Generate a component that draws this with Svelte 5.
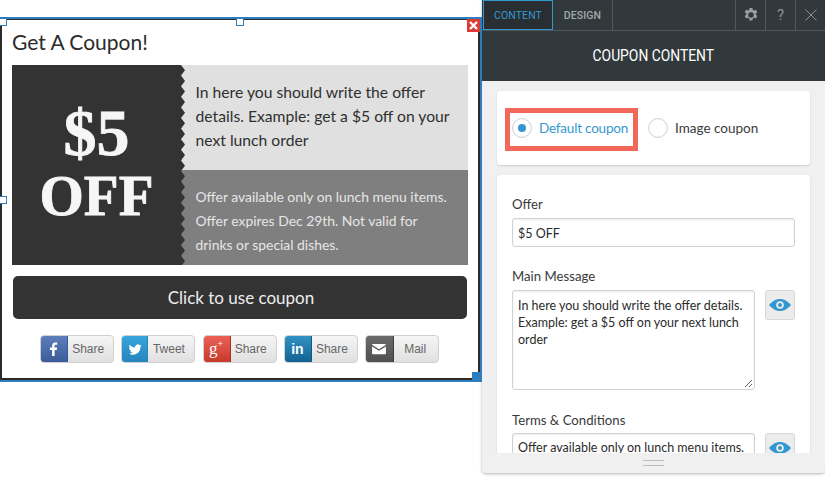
<script>
	const shares = [
		{ id: 'fb', label: 'Share' },
		{ id: 'tw', label: 'Tweet' },
		{ id: 'gp', label: 'Share' },
		{ id: 'li', label: 'Share' },
		{ id: 'mail', label: 'Mail' }
	];
	const teeth = Array.from({ length: 19 }, (_, i) => i);
	const zigzag = 'M0 0' + teeth.map((i) => ` L4 ${i * 10.6 + 5.3} L0 ${(i + 1) * 10.6}`).join('') + ' Z';
</script>

<div class="page">
	<section class="stage">
		<div class="frame">
			<span class="handle tl"></span>
			<span class="handle tc"></span>
			<span class="handle ml"></span>
			<span class="handle br"></span>
			<span class="remove">
				<svg viewBox="0 0 13 13" width="13" height="13"><path d="M3 3l7 7M10 3l-7 7" stroke="#fff" stroke-width="2.4" /></svg>
			</span>

			<h1>Get A Coupon!</h1>
			<div class="offer">
				<div class="price">
					<div class="amount">$5</div>
					<div class="off">OFF</div>
					<svg class="teeth" width="4" height="200" viewBox="0 0 4 200"><path d={zigzag} fill="#333" /></svg>
				</div>
				<div class="details">
					<p class="message">In here you should write the offer details. Example: get a $5 off on your next lunch order</p>
					<p class="terms">Offer available only on lunch menu items. Offer expires Dec 29th. Not valid for drinks or special dishes.</p>
				</div>
			</div>
			<button class="use">Click to use coupon</button>
			<div class="shares">
				{#each shares as s}
					<div class="share" class:wide={s.id === 'mail'}>
						<span class="ico {s.id}">
							{#if s.id === 'fb'}
								<svg viewBox="0 0 27 27" width="27" height="27"><path d="M14.600 20v-6h2.200l.3-2.500h-2.500v-1.600c0-.7.3-1.200 1.200-1.200h1.400V6.500c-.3 0-1-.1-1.900-.1-2 0-3.200 1.200-3.200 3.300v1.800H9.900V14h2.200v6z" fill="#fff" /></svg>
							{:else if s.id === 'tw'}
								<svg viewBox="0 0 27 27" width="25" height="25"><path d="M21 9c-.5.200-1.100.4-1.700.5.600-.4 1.100-1 1.300-1.600-.6.300-1.200.6-1.900.7a3 3 0 0 0-5.100 2.700c-2.500-.1-4.700-1.300-6.200-3.100-.8 1.400-.4 3.100.9 4-.5 0-.9-.1-1.400-.4 0 1.500 1 2.700 2.400 3-.4.100-.9.100-1.300 0 .4 1.200 1.500 2 2.800 2.100a6 6 0 0 1-4.400 1.200 8.600 8.600 0 0 0 13.200-7.600c.6-.4 1.100-.9 1.400-1.500z" fill="#fff" /></svg>
							{:else if s.id === 'gp'}
								<span class="gp-text">g<sup>+</sup></span>
							{:else if s.id === 'li'}
								<span class="li-text">in</span>
							{:else}
								<svg viewBox="0 0 27 27" width="24" height="24"><path d="M6.500 8h14c.5 0 .8.300.8.700l-7.800 5-7.800-5c0-.4.300-.7.800-.7zM5.700 10.600l7.800 4.900 7.800-4.900v8c0 .5-.4.900-.9.900H6.600c-.5 0-.9-.4-.9-.9z" fill="#fff" /></svg>
							{/if}
						</span>
						<span class="share-label">{s.label}</span>
					</div>
				{/each}
			</div>
		</div>
	</section>

	<aside class="panel">
		<div class="topbar">
			<div class="tab active">CONTENT</div>
			<div class="tab">DESIGN</div>
			<div class="tools">
				<span class="tool">
					<svg viewBox="0 0 16 16" width="16" height="16"><path fill-rule="evenodd" d="M6.600 1h2.800l.4 2 1.200.6 1.900-.8 1.400 2.400-1.500 1.300v1.300l1.500 1.300-1.400 2.400-1.900-.8-1.200.7-.4 2H6.600l-.4-2-1.200-.7-1.900.8-1.400-2.400 1.500-1.300V6.500L1.700 5.200l1.400-2.400 1.900.8 1.200-.6zM8 5.200a2.800 2.800 0 1 0 0 5.600 2.800 2.800 0 0 0 0-5.600z" fill="#9aa0a2" /></svg>
				</span>
				<span class="tool help">?</span>
				<span class="tool">
					<svg viewBox="0 0 12 12" width="12" height="12"><path d="M.5.500l11 11M11.500.500l-11 11" stroke="#8b9294" stroke-width="1" /></svg>
				</span>
			</div>
		</div>
		<div class="heading"><span>COUPON CONTENT</span></div>
		<div class="body">
			<div class="card types">
				<label class="highlight">
					<span class="radio on"></span>
					<span class="selected">Default coupon</span>
				</label>
				<label class="other">
					<span class="radio"></span>
					<span>Image coupon</span>
				</label>
			</div>
			<div class="card fields">
				<div class="field-label">Offer</div>
				<div class="input">$5 OFF</div>
				<div class="field-label second">Main Message</div>
				<div class="row">
					<div class="textarea">
						In here you should write the offer details. Example: get a $5 off on your next lunch order
						<svg class="grip" width="9" height="9" viewBox="0 0 9 9"><path d="M1 8l7-7M5 8l3-3" stroke="#666" stroke-width="1" /></svg>
					</div>
					{@render eye()}
				</div>
				<div class="field-label third">Terms &amp; Conditions</div>
				<div class="row">
					<div class="input short">Offer available only on lunch menu items.</div>
					{@render eye()}
				</div>
			</div>
		</div>
		<div class="footer"><span class="lines"></span></div>
	</aside>
</div>

{#snippet eye()}
	<span class="eye">
		<svg viewBox="0 0 22 14" width="22" height="14">
			<path fill-rule="evenodd" d="M11 1c4.500 0 8.300 2.700 11 6-2.700 3.300-6.500 6-11 6S2.700 10.300 0 7c2.700-3.300 6.500-6 11-6zm0 2.200a3.800 3.800 0 1 0 0 7.600 3.800 3.800 0 0 0 0-7.600zm0 1.800a2 2 0 1 1 0 4 2 2 0 0 1 0-4z" fill="#3498d0" />
		</svg>
	</span>
{/snippet}

<style>
	:global(body) {
		margin: 0;
		background: #fff;
	}

	.page {
		display: flex;
		width: 825px;
		height: 477px;
		overflow: hidden;
		font-family: Lato, sans-serif;
	}

	.stage {
		width: 482px;
		flex: none;
		padding-top: 17px;
		box-sizing: border-box;
	}

	.frame {
		position: relative;
		height: 365px;
		box-sizing: border-box;
		border: 2px solid #2e7dbf;
		border-left: 0;
		background: #fff;
		padding: 1px 12px 0 0;
		box-shadow: inset 2px 1px 0 #2c2c2c, inset -2px -2px 0 #2c2c2c;
	}

	.handle {
		position: absolute;
		width: 6px;
		height: 6px;
		background: #fff;
		border: 1px solid #2e7dbf;
	}

	.tl { left: -1px; top: -1px; }
	.tc { left: 236px; top: -1px; }
	.ml { left: -1px; top: 177px; }

	.br {
		right: 0;
		bottom: 0;
		background: #2e7dbf;
	}

	.remove {
		position: absolute;
		right: 0;
		top: 0;
		width: 13px;
		height: 13px;
		background: #dc3a33;
		display: flex;
	}

	h1 {
		margin: 0 0 0 12px;
		height: 45px;
		font-size: 21px;
		line-height: 44px;
		font-weight: 400;
		color: #2b2b2b;
	}

	.offer {
		position: relative;
		margin-left: 12px;
		height: 200px;
		display: flex;
	}

	.price {
		position: relative;
		width: 169px;
		flex: none;
		background: #333;
		color: #f6f6f6;
		font-family: 'Liberation Serif', serif;
		font-weight: 700;
		text-align: center;
		-webkit-text-stroke: 0.8px #f6f6f6;
	}

	.amount {
		font-size: 66px;
		line-height: 62px;
		margin-top: 37px;
	}

	.off {
		font-size: 57px;
		line-height: 60px;
		margin-top: 2px;
	}

	.teeth {
		position: absolute;
		left: 169px;
		top: 0;
	}

	.details {
		flex: 1;
		display: flex;
		flex-direction: column;
	}

	.details p {
		margin: 0;
		padding-left: 14.500px;
		padding-right: 12px;
	}

	.message {
		height: 105px;
		box-sizing: border-box;
		padding-top: 15px;
		background: #e0e0e0;
		color: #2f2f2f;
		font-size: 15.700px;
		line-height: 24px;
	}

	.terms {
		flex: 1;
		padding-top: 15px;
		background: #7f7f7f;
		color: #e6e6e6;
		font-size: 13.900px;
		line-height: 24px;
	}

	.use {
		display: block;
		width: 454px;
		height: 43px;
		margin: 11px 0 0 13px;
		padding: 0 0 0 2px;
		border: 0;
		border-radius: 5px;
		background: #333;
		color: #eee;
		font-family: Lato, sans-serif;
		font-size: 17px;
	}

	.shares {
		display: flex;
		gap: 7.250px;
		margin: 16px 0 0 40.200px;
	}

	.share {
		display: flex;
		width: 74px;
		height: 28px;
		box-sizing: border-box;
		border: 1px solid #d0d0d0;
		border-radius: 4px;
		background: linear-gradient(#f5f5f5, #e0e0e0);
		overflow: hidden;
		font-family: 'Liberation Sans', sans-serif;
		font-size: 12px;
		color: #666;
	}

	.ico {
		width: 27px;
		height: 28px;
		flex: none;
		margin: -1px 0 0 -1px;
		display: flex;
		align-items: center;
		justify-content: center;
		color: #fff;
	}

	.wide .ico {
		width: 28px;
	}

	.fb { background: linear-gradient(#5f7fbc, #3b5a98); border-right: 1px solid #2f5f9a; }
	.tw { background: linear-gradient(#37a6dd, #2584bb); border-right: 1px solid #2a86b8; padding-left: 2px; box-sizing: border-box; }
	.gp { background: linear-gradient(#ec6256, #c5392a); border-right: 1px solid #a83023; }
	.li { background: linear-gradient(#3394c6, #12608f); border-right: 1px solid #105a86; }
	.mail { background: linear-gradient(#6c6c6c, #4f4f4f); border-right: 1px solid #3f3f3f; }

	.gp-text {
		font-family: 'Liberation Serif', serif;
		font-size: 17px;
		line-height: 20px;
	}

	.gp-text sup {
		font-size: 10px;
		line-height: 0;
	}

	.li-text {
		font-weight: 700;
		font-size: 14px;
	}

	.share-label {
		flex: 1;
		text-align: center;
		line-height: 26px;
		padding-right: 5px;
	}

	.wide .share-label {
		padding-right: 2px;
	}

	.panel {
		width: 343px;
		height: 473px;
		flex: none;
		display: flex;
		flex-direction: column;
		background: #f0f0f0;
		border-radius: 0 0 4px 4px;
		box-shadow: 0 1px 3px rgba(0, 0, 0, 0.3);
		font-family: Lato, sans-serif;
		overflow: hidden;
	}

	.topbar {
		display: flex;
		height: 31px;
		flex: none;
		box-sizing: border-box;
		background: #32393c;
		border-bottom: 1px solid #50585b;
		font-family: Roboto, sans-serif;
		font-size: 10.500px;
		font-weight: 500;
		letter-spacing: 0.1px;
	}

	.tab {
		height: 30px;
		box-sizing: border-box;
		display: flex;
		align-items: center;
		justify-content: center;
		color: #a3a8aa;
		border-right: 1px solid #50585b;
	}

	.tab.active {
		width: 70px;
		margin-left: 1px;
		border: 1px solid #3498d0;
		background: #282e31;
		color: #3498d0;
		font-weight: 400;
	}

	.tab:not(.active) {
		width: 60px;
	}

	.tools {
		display: flex;
		margin-left: auto;
	}

	.tool {
		width: 30px;
		box-sizing: border-box;
		display: flex;
		align-items: center;
		justify-content: center;
		border-left: 1px solid #50585b;
		color: #8b9294;
		font-size: 15px;
		font-weight: 400;
	}

	.heading {
		height: 50px;
		flex: none;
		background: #32393c;
		color: #fff;
		text-align: center;
		font-family: Roboto, sans-serif;
		font-size: 16.500px;
		line-height: 50px;
	}

	.heading span {
		display: inline-block;
		transform: scaleX(0.84);
	}

	.body {
		flex: 1;
		min-height: 0;
		overflow: hidden;
		padding: 10px 15px 0;
	}

	.card {
		background: #fff;
		border-radius: 3px;
		box-shadow: 0 1px 2px rgba(0, 0, 0, 0.15);
		font-size: 13.500px;
		color: #3a3a3a;
	}

	.types {
		height: 74px;
		box-sizing: border-box;
		padding: 17px 8px;
		display: flex;
		align-items: flex-start;
		margin-bottom: 10px;
	}

	label {
		display: flex;
		align-items: center;
	}

	.highlight {
		width: 133px;
		height: 43px;
		box-sizing: border-box;
		border: 5px solid #f2685a;
		padding: 0 0 3px 2px;
		gap: 7px;
	}

	.other {
		height: 43px;
		box-sizing: border-box;
		padding-bottom: 3px;
		margin-left: 10px;
		gap: 7px;
	}

	.selected {
		color: #3498d0;
		letter-spacing: -0.2px;
	}

	.radio {
		width: 20px;
		height: 20px;
		flex: none;
		box-sizing: border-box;
		border: 1px solid #cfd6da;
		border-radius: 50%;
		box-shadow: inset 0 0 1px #ddd;
		display: flex;
		align-items: center;
		justify-content: center;
	}

	.radio.on::after {
		content: '';
		width: 8px;
		height: 8px;
		border-radius: 50%;
		background: #3498d0;
	}

	.fields {
		height: 300px;
		box-sizing: border-box;
		padding: 22px 15px 0;
	}

	.field-label {
		height: 21px;
		line-height: 14px;
		font-size: 13.200px;
	}

	.field-label.second {
		margin-top: 22px;
		height: 21px;
	}

	.field-label.third {
		margin-top: 23px;
		height: 20px;
	}

	.input, .textarea {
		box-sizing: border-box;
		border: 1px solid #cdd3d6;
		border-radius: 3px;
		box-shadow: inset 0 1px 2px rgba(0, 0, 0, 0.08);
		padding: 6px 5px;
		font-size: 12.500px;
		line-height: 17px;
		color: #2b2b2b;
		background: #fff;
	}

	.input {
		width: 283px;
		height: 29px;
	}

	.input.short {
		width: 243px;
		padding-top: 5px;
		white-space: nowrap;
		overflow: hidden;
	}

	.row {
		display: flex;
		gap: 10px;
		align-items: flex-start;
	}

	.textarea {
		position: relative;
		width: 243px;
		height: 100px;
	}

	.grip {
		position: absolute;
		right: 1px;
		bottom: 1px;
	}

	.eye {
		width: 30px;
		height: 30px;
		flex: none;
		box-sizing: border-box;
		border: 1px solid #d5d8da;
		border-radius: 3px;
		background: #ececec;
		display: flex;
		align-items: center;
		justify-content: center;
	}

	.footer {
		height: 20px;
		flex: none;
		position: relative;
		background: #f0f0f0;
		display: flex;
		align-items: center;
		justify-content: center;
	}

	.lines {
		width: 21px;
		height: 4px;
		border-top: 1px solid #bbb;
		border-bottom: 1px solid #bbb;
	}
</style>
